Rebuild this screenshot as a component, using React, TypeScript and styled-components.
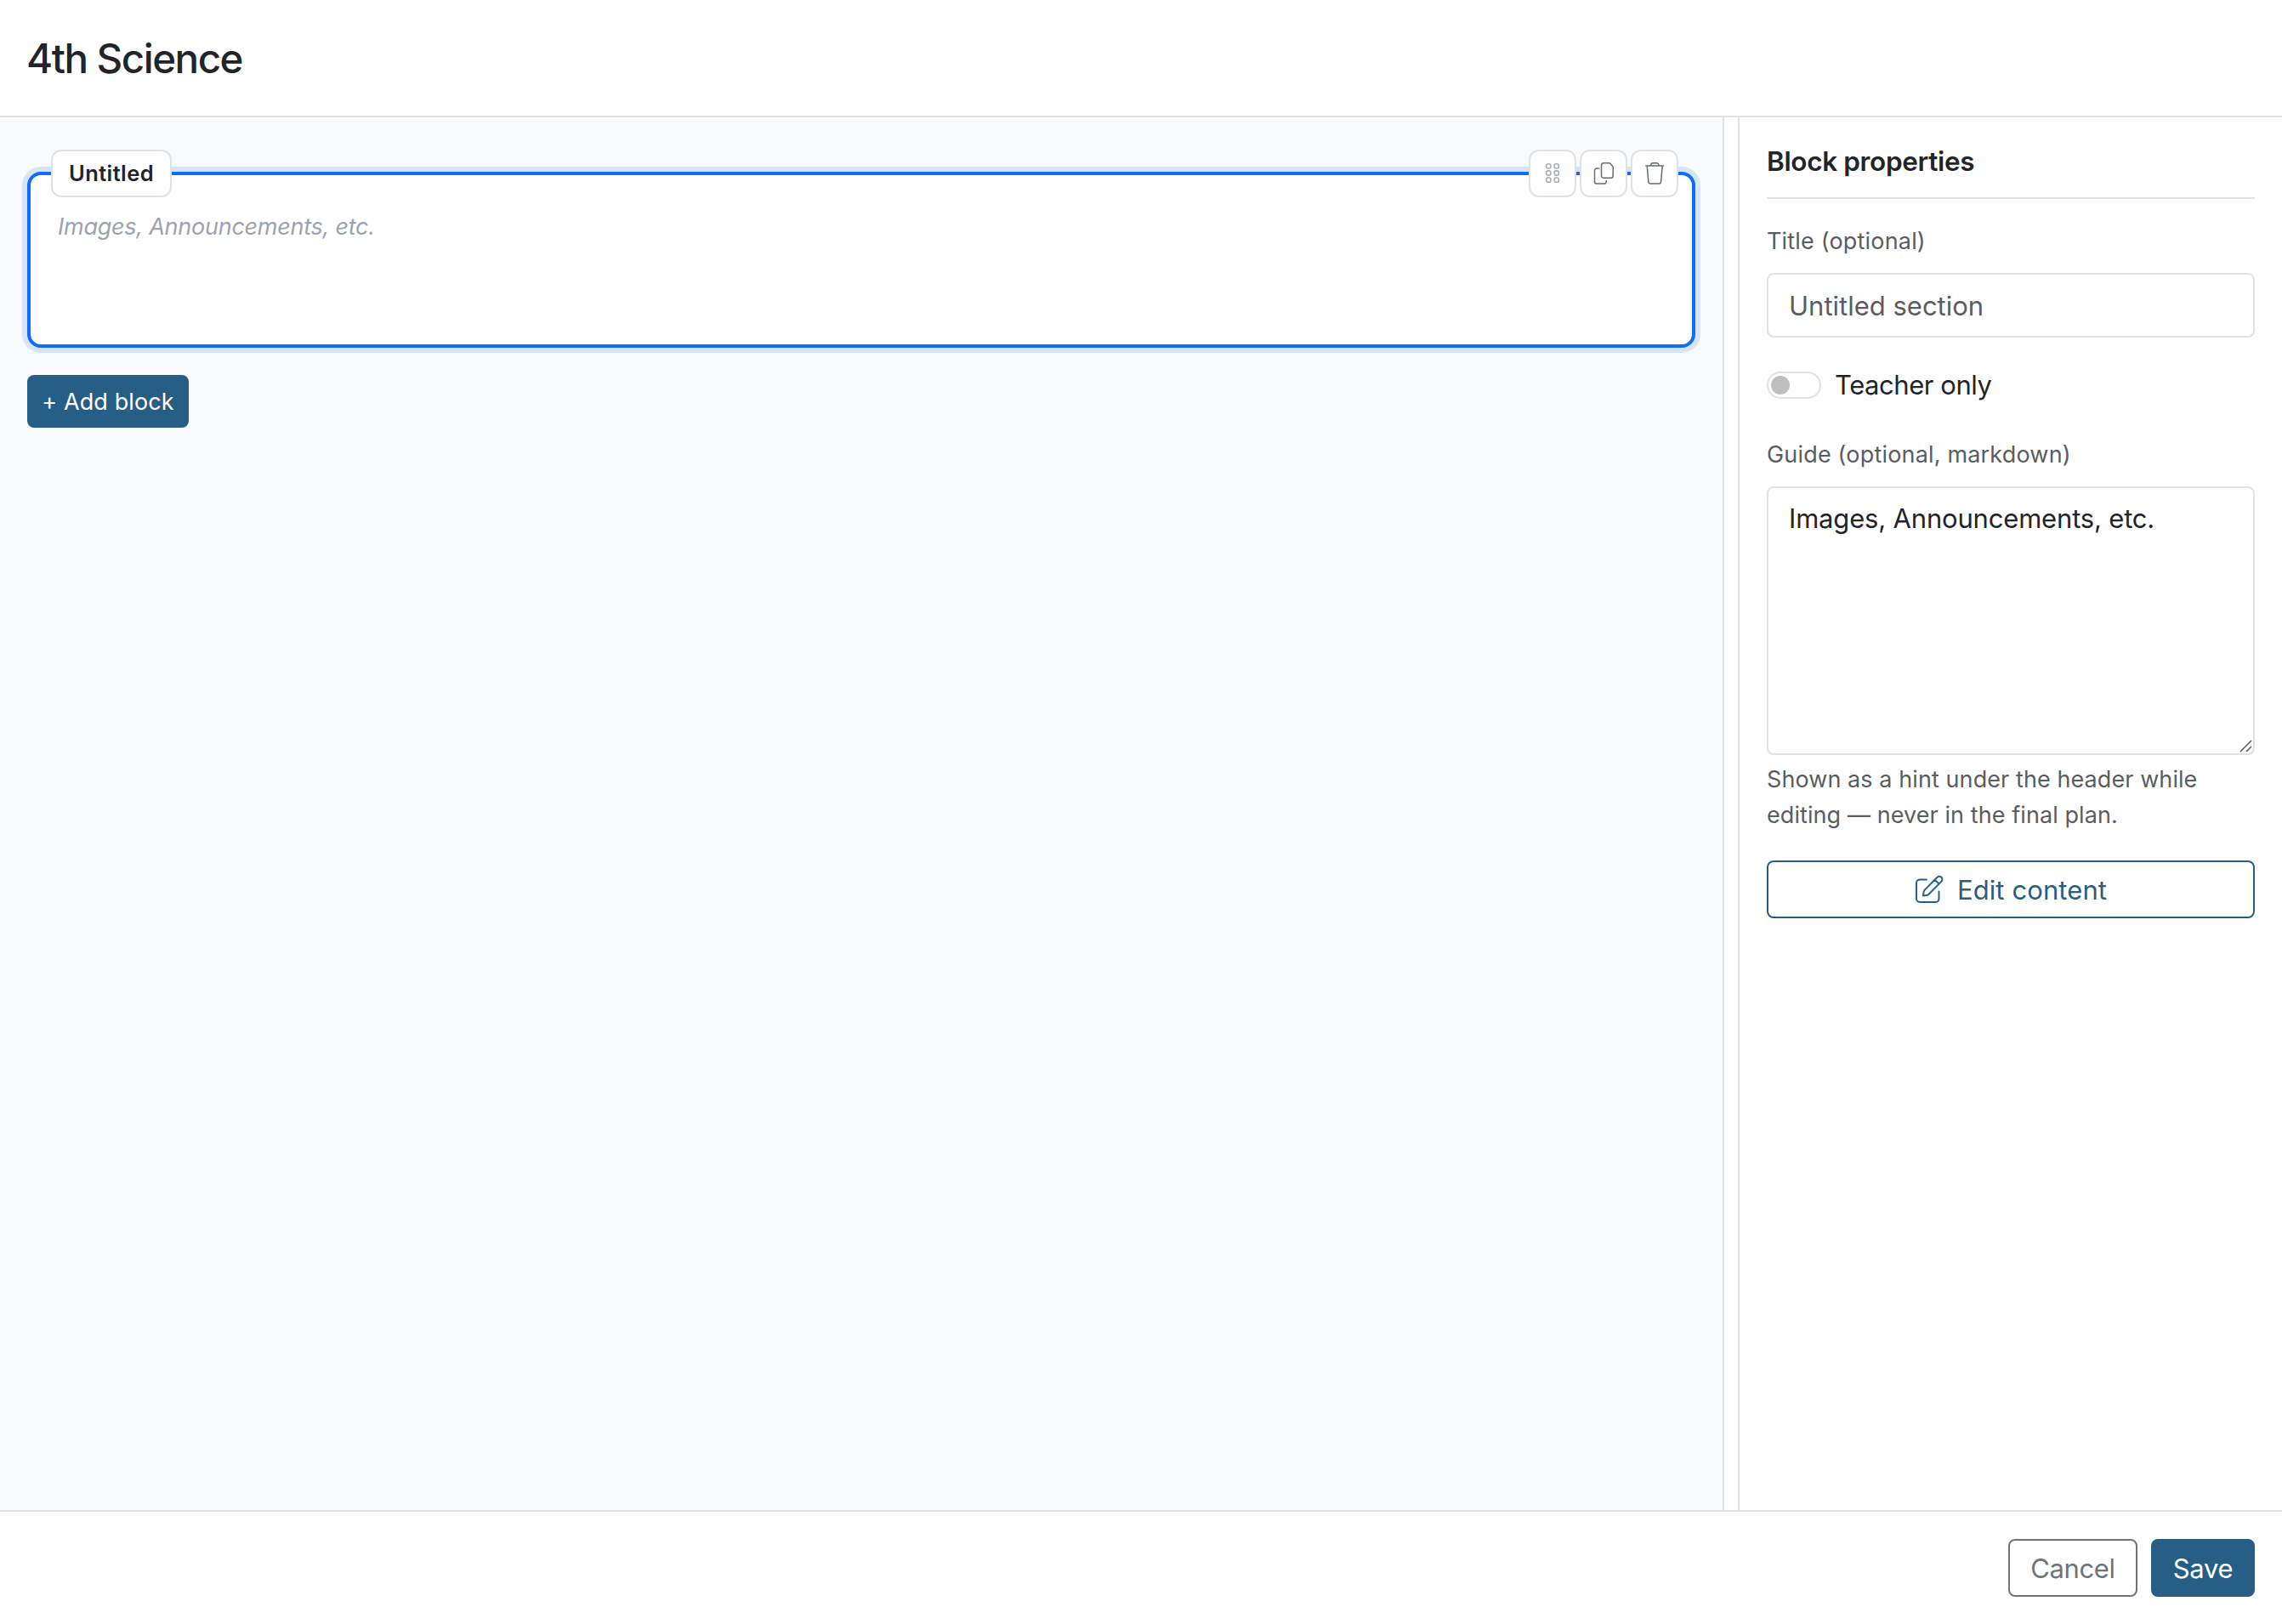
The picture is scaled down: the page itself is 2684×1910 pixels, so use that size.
import React, { useState } from 'react';
import styled, { createGlobalStyle, css } from 'styled-components';

const GlobalStyle = createGlobalStyle`
  * {
    box-sizing: border-box;
  }

  body {
    margin: 0;
    background: #fff;
    color: #212529;
    font-family: Inter, 'Liberation Sans', sans-serif;
    font-size: 31px;
    font-weight: 430;
    line-height: 48px;
  }

  button, input, textarea {
    font-family: inherit;
    font-weight: inherit;
  }
`

const Page = styled.div`
  display: flex;
  flex-direction: column;
  width: 100%;
  height: 100vh;
  min-height: 1910px;
`

const Header = styled.header`
  display: flex;
  align-items: center;
  height: 138px;
  padding: 2px 31px 0;
  border-bottom: 2px solid #dee2e6;

  h1 {
    margin: 0;
    font-size: 47.5px;
    font-weight: 550;
    line-height: 58px;
    letter-spacing: -1.5px;
  }
`

const Body = styled.main`
  display: flex;
  flex: 1;
`

const Canvas = styled.section`
  flex: 1;
  padding: 64px 32px 32px;
  background: #f8fafc;
`

const Block = styled.div`
  position: relative;
  height: 207px;
  padding: 40px 32px;
  border: 4px solid #0d6efd;
  border-radius: 16px;
  background: #fff;
  box-shadow: 0 0 0 6px #d8e4fa;
`

const chip = css`
  display: flex;
  align-items: center;
  justify-content: center;
  height: 56px;
  border: 2px solid #dee2e6;
  border-radius: 12px;
  background: #fff;
`

const BlockTitle = styled.div`
  ${chip}
  position: absolute;
  top: -30px;
  left: 24px;
  width: 142px;
  font-size: 25.5px;
  font-weight: 640;
  letter-spacing: 0.4px;
`

const BlockTools = styled.div`
  position: absolute;
  top: -30px;
  right: 16px;
  display: flex;
  gap: 4px;
`

const ToolButton = styled.button<{ $muted?: boolean }>`
  ${chip}
  width: 56px;
  padding: 0;
  color: ${({ $muted }) => ($muted ? '#a9afb5' : '#666e76')};
`

const BlockHint = styled.div`
  font-size: 27px;
  font-style: italic;
  line-height: 42px;
  letter-spacing: -0.25px;
  color: #9ca3af;
`

const Button = styled.button<{ $variant: 'primary' | 'outline' | 'secondary'; $small?: boolean }>`
  display: flex;
  align-items: center;
  justify-content: center;
  height: ${({ $small }) => ($small ? '62px' : '68px')};
  padding: 0;
  border: 2px solid #265e86;
  border-radius: 8px;
  background: #fff;
  color: #265e86;
  font-size: ${({ $small }) => ($small ? '27px' : '31px')};

  ${({ $variant }) => $variant === 'primary' && css`
    background: #265e86;
    color: #fff;
  `}
  ${({ $variant }) => $variant === 'secondary' && css`
    border-color: #6c757d;
    color: #6c757d;
  `}
`

const AddButton = styled(Button)`
  width: 190px;
  margin-top: 32px;
  letter-spacing: 0.1px;
`

const Splitter = styled.div`
  width: 20px;
  border: solid #dee2e6;
  border-width: 0 2px;
`

const Panel = styled.aside`
  width: 638px;
  padding: 28px 32px;

  h2 {
    margin: 0;
    height: 68px;
    border-bottom: 2px solid #dee2e6;
    font-size: 31.5px;
    font-weight: 590;
    line-height: 48px;
    letter-spacing: -0.35px;
  }
`

const Label = styled.label`
  display: block;
  margin-top: 29px;
  margin-bottom: 16px;
  font-size: 27px;
  line-height: 42px;
  letter-spacing: 0.18px;
  color: #5a5d60;
`

const GuideLabel = styled(Label)`
  margin-top: 37px;
`

const field = css`
  display: block;
  width: 100%;
  border: 2px solid #dee2e6;
  border-radius: 8px;
  background: #fff;
  color: #212529;
  font-size: 31px;
  line-height: 48px;
  outline: none;
`

const Input = styled.input`
  ${field}
  height: 76px;
  padding: 12px 24px;

  &::placeholder {
    color: #5a5d60;
    opacity: 1;
  }
`

const TextareaWrap = styled.div`
  position: relative;
`

const Textarea = styled.textarea`
  ${field}
  height: 316px;
  padding: 12px 24px;
  letter-spacing: -0.18px;
  resize: none;
`

const Grip = styled.svg`
  position: absolute;
  right: 3px;
  bottom: 3px;
`

const SwitchRow = styled.div`
  display: flex;
  align-items: center;
  gap: 16px;
  height: 48px;
  margin-top: 32px;
  letter-spacing: -0.45px;
`

const Switch = styled.button<{ $on: boolean }>`
  display: flex;
  align-items: center;
  justify-content: ${({ $on }) => ($on ? 'flex-end' : 'flex-start')};
  width: 64px;
  height: 32px;
  padding: 0 3px;
  border: 2px solid #dee2e6;
  border-radius: 16px;
  background: #fff;

  &::before {
    content: '';
    width: 22px;
    height: 22px;
    border-radius: 50%;
    background: #bfbfbf;
  }
`

const Help = styled.p`
  margin: 8px 0 32px;
  font-size: 27px;
  line-height: 42px;
  letter-spacing: 0.08px;
  color: #5a5d60;
`

const EditButton = styled(Button)`
  width: 100%;
  gap: 16px;
  letter-spacing: 0.1px;
`

const Footer = styled.footer`
  display: flex;
  justify-content: flex-end;
  gap: 16px;
  height: 134px;
  padding: 32px;
  border-top: 2px solid #dee2e6;
`

const CancelButton = styled(Button)`
  width: 152px;
  letter-spacing: -0.4px;
`

const SaveButton = styled(Button)`
  width: 122px;
  letter-spacing: -0.3px;
`

const GripIcon = () => (
  <svg width="28" height="28" viewBox="0 0 28 28" fill="none" stroke="currentColor" strokeWidth="1.6">
    {[5.4, 13.5, 21.6].map((y) => [9.3, 18.7].map((x) => (
      <rect key={`${x}-${y}`} x={x - 2.6} y={y - 2.6} width="5.2" height="5.2" rx="2" />
    )))}
  </svg>
)

const CopyIcon = () => (
  <svg width="28" height="28" viewBox="0 0 28 28" fill="none" stroke="currentColor" strokeWidth="1.5" strokeLinecap="round" strokeLinejoin="round">
    <path d="M14.1 1.7h6.2c.7 0 1.3.3 1.7.7l2.5 2.9c.5.5.7 1.1.7 1.7v9.7a2.6 2.6 0 0 1-2.6 2.6h-8.5a2.6 2.6 0 0 1-2.6-2.6V4.3a2.6 2.6 0 0 1 2.6-2.6z" />
    <path d="M8.8 8H6.1a2.6 2.6 0 0 0-2.6 2.6v12.8A2.6 2.6 0 0 0 6.1 26h8.5a2.6 2.6 0 0 0 2.6-2.6v-.9" />
  </svg>
)

const TrashIcon = () => (
  <svg width="28" height="28" viewBox="0 0 28 28" fill="none" stroke="currentColor" strokeWidth="1.5" strokeLinecap="round" strokeLinejoin="round">
    <path d="M3.8 4.9h20.8M9.7 4.9v-.6a2.6 2.6 0 0 1 2.6-2.6h4.1a2.6 2.6 0 0 1 2.6 2.6v.6M5.2 4.9l1.6 18.8A2.5 2.5 0 0 0 9.3 26h9.8a2.5 2.5 0 0 0 2.5-2.3l1.6-18.8" />
  </svg>
)

const EditIcon = () => (
  <svg width="34" height="34" viewBox="0 0 34 34" fill="none" stroke="currentColor" strokeWidth="2" strokeLinecap="round" strokeLinejoin="round">
    <path d="M14 5.6H6a4 4 0 0 0-4 4V28a4 4 0 0 0 4 4h18.5a4 4 0 0 0 4-4v-8.5" />
    <path d="M10 24.5l.6-4.6c.1-.8.5-1.5 1-2L26.5 2.7a3.4 3.4 0 0 1 4.9 4.9L16.5 22.7c-.5.5-1.2.9-1.9 1.1zM23.6 5.6l4.9 4.9" />
  </svg>
)

export default function App() {

  const [title, setTitle] = useState('')
  const [teacherOnly, setTeacherOnly] = useState(false)
  const [guide, setGuide] = useState('Images, Announcements, etc.')

  return (
    <>
      <GlobalStyle />
      <Page>
        <Header>
          <h1>4th Science</h1>
        </Header>
        <Body>
          <Canvas>
            <Block>
              <BlockTitle>{title || 'Untitled'}</BlockTitle>
              <BlockTools>
                <ToolButton $muted><GripIcon /></ToolButton>
                <ToolButton><CopyIcon /></ToolButton>
                <ToolButton><TrashIcon /></ToolButton>
              </BlockTools>
              <BlockHint>{guide}</BlockHint>
            </Block>
            <AddButton $variant="primary" $small>+ Add block</AddButton>
          </Canvas>
          <Splitter />
          <Panel>
            <h2>Block properties</h2>
            <Label>Title (optional)</Label>
            <Input
              value={title}
              onChange={(e) => setTitle(e.target.value)}
              placeholder="Untitled section"
            />
            <SwitchRow>
              <Switch $on={teacherOnly} onClick={() => setTeacherOnly(!teacherOnly)} />
              <span>Teacher only</span>
            </SwitchRow>
            <GuideLabel>Guide (optional, markdown)</GuideLabel>
            <TextareaWrap>
              <Textarea value={guide} onChange={(e) => setGuide(e.target.value)} />
              <Grip width="15" height="15" viewBox="0 0 15 15" stroke="#555" strokeWidth="1.5">
                <path d="M1 14L14 1M8 14l6-6" />
              </Grip>
            </TextareaWrap>
            <Help>
              Shown as a hint under the header while<br />editing — never in the final plan.
            </Help>
            <EditButton $variant="outline">
              <EditIcon />
              Edit content
            </EditButton>
          </Panel>
        </Body>
        <Footer>
          <CancelButton $variant="secondary">Cancel</CancelButton>
          <SaveButton $variant="primary">Save</SaveButton>
        </Footer>
      </Page>
    </>
  );
}
